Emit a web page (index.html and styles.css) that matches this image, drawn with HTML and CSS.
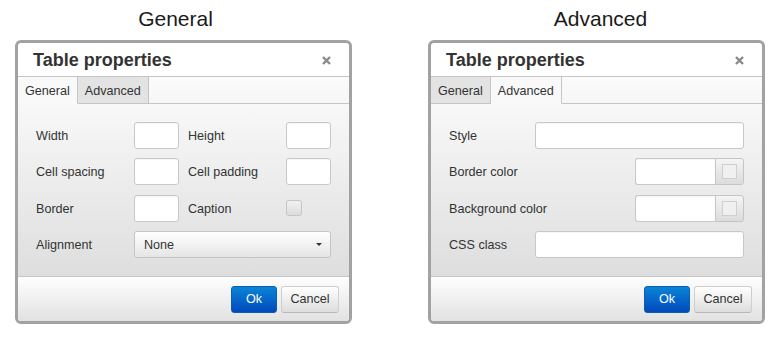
FILE: index.html
```html
<!doctype html>
<html lang=en>
<head>
<meta charset=utf-8>
<title>Table properties</title>
<link rel="stylesheet" href="styles.css">
</head>
<body>

<!-- general tab -->

<section class="column">
	<h2 class="caption caption-left">General</h2>
	<div class="dialog">
		<div class="head">
			<span class="title">Table properties</span>
			<svg class="close" width="9" height="9" viewBox="0 0 9 9"><path d="M1 1 L8 8 M8 1 L1 8" stroke="#8a8a8a" stroke-width="2.4"/></svg>
		</div>
		<div class="tabs">
			<span class="tab active">General</span>
			<span class="tab">Advanced</span>
		</div>
		<div class="body">
			<form class="grid-general">
				<label>Width</label>
				<span class="input"></span>
				<label>Height</label>
				<span class="input"></span>

				<label>Cell spacing</label>
				<span class="input"></span>
				<label>Cell padding</label>
				<span class="input"></span>

				<label>Border</label>
				<span class="input"></span>
				<label>Caption</label>
				<span class="check-cell"><span class="checkbox"></span></span>

				<label>Alignment</label>
				<span class="select">None<i class="caret"></i></span>
			</form>
		</div>
		<div class="foot">
			<button class="btn primary">Ok</button>
			<button class="btn">Cancel</button>
		</div>
	</div>
</section>

<!-- advanced tab -->

<section class="column">
	<h2 class="caption caption-right">Advanced</h2>
	<div class="dialog">
		<div class="head">
			<span class="title">Table properties</span>
			<svg class="close" width="9" height="9" viewBox="0 0 9 9"><path d="M1 1 L8 8 M8 1 L1 8" stroke="#8a8a8a" stroke-width="2.4"/></svg>
		</div>
		<div class="tabs">
			<span class="tab">General</span>
			<span class="tab active">Advanced</span>
		</div>
		<div class="body">
			<form class="grid-advanced">
				<label>Style</label>
				<span class="input"></span>

				<label>Border color</label>
				<span class="color"><span class="color-input"></span><span class="color-btn"><i></i></span></span>

				<label>Background color</label>
				<span class="color"><span class="color-input"></span><span class="color-btn"><i></i></span></span>

				<label>CSS class</label>
				<span class="input"></span>
			</form>
		</div>
		<div class="foot">
			<button class="btn primary">Ok</button>
			<button class="btn">Cancel</button>
		</div>
	</div>
</section>

</body>
</html>
```

FILE: styles.css
```css
/* ====  Page  ==== */

* {
	box-sizing: border-box;
}

html, body {
	margin:     0;
	background: white;
}

body {
	display:     flex;
	gap:         76px;
	padding:     0 0 0 15px;
	font-family: "Liberation Sans", Arial, sans-serif;
	color:       #333;
}

.column {
	display:        flex;
	flex-direction: column;
	width:          337px;
}

.caption {
	margin:      0 0 7px;
	padding-top: 7px;
	height:      33px;
	line-height: 24px;
	font-size:   21px;
	font-weight: normal;
	color:       #1a1a1a;
	text-align:  center;
}

.caption-left  { padding-right: 16px; }
.caption-right { padding-left:  8px; }


/* ====  Dialog  ==== */

.dialog {
	display:        flex;
	flex-direction: column;
	border:         3px solid #a2a2a2;
	border-radius:  6px;
	overflow:       hidden;
	background:     white;
}

.head {
	display:         flex;
	align-items:     center;
	justify-content: space-between;
	height:          34px;
	padding:         1px 18px 0 15px;
	border-bottom:   1px solid #c5c5c5;
}

.title {
	font-size:   18px;
	font-weight: bold;
	color:       #333;
}

.close {
	display: block;
}

.tabs {
	display:       flex;
	height:        27px;
	background:    linear-gradient(#fbfbfb, #f6f6f6);
	border-bottom: 1px solid #c5c5c5;
}

.tab {
	display:       flex;
	align-items:   center;
	padding:       1px 7px 0 7px;
	margin-bottom: -1px;
	font-size:     12.6px;
	white-space:   nowrap;
	background:    #e3e3e3;
	border-right:  1px solid #c5c5c5;
	border-bottom: 1px solid #c5c5c5;
	color:         #333;
}

.tab.active {
	background:          #f9f9f9;
	border-bottom-color: #f9f9f9;
}

.body {
	height:     172px;
	padding:    18px;
	background: linear-gradient(#f8f8f8, #dedede);
}

.foot {
	display:         flex;
	justify-content: flex-end;
	align-items:     center;
	gap:             4px;
	height:          45px;
	padding:         0 10px 0 0;
	border-top:      1px solid #c5c5c5;
	background:      linear-gradient(#fefefe, #e2e2e2);
}


/* ====  Form controls  ==== */

form {
	display:     grid;
	row-gap:     9.33px;
	column-gap:  9px;
	align-items: center;
	margin:      0;
}

.grid-general  { grid-template-columns: 89px 45px 89px 45px; }
.grid-advanced { grid-template-columns: 77px 1fr; }

label {
	font-size:   12.6px;
	white-space: nowrap;
	padding-top: 1px;
	color:       #333;
}

.input,
.color-input {
	display:       block;
	height:        27px;
	background:    white;
	border:        1px solid #c8c8c8;
	border-radius: 3px;
	box-shadow:    inset 0 1px 1px rgba(0, 0, 0, 0.04);
}

.check-cell {
	display:     flex;
	align-items: center;
	height:      27px;
}

.checkbox {
	width:         16px;
	height:        16px;
	border:        1px solid #c5c5c5;
	border-radius: 3px;
	background:    linear-gradient(#f2f2f2, #dcdcdc);
}

.select {
	grid-column:     span 3;
	display:         flex;
	align-items:     center;
	justify-content: space-between;
	height:          27px;
	padding:         1px 8px 0 9px;
	font-size:       12.6px;
	color:           #333;
	border:          1px solid #c5c5c5;
	border-radius:   3px;
	background:      linear-gradient(#ffffff, #e5e5e5);
}

.caret {
	width:        0;
	height:       0;
	border-left:  3px solid transparent;
	border-right: 3px solid transparent;
	border-top:   3px solid #333;
}

.color {
	display:      flex;
	justify-self: end;
	width:        109px;
	height:       27px;
}

.color-input {
	flex:                       1;
	border-top-right-radius:    0;
	border-bottom-right-radius: 0;
	border-right:               0;
}

.color-btn {
	display:         flex;
	align-items:     center;
	justify-content: center;
	width:           29px;
	border:          1px solid #c5c5c5;
	border-radius:   0 3px 3px 0;
	background:      linear-gradient(#f4f4f4, #dcdcdc);
}

.color-btn i {
	width:      15px;
	height:     15px;
	border:     1px solid #cfcfcf;
	background: #f0f0f0;
}

.btn {
	height:              27px;
	width:               58px;
	padding:             0;
	font-family:         inherit;
	font-size:           12.6px;
	color:               #333;
	border:              1px solid #cfcfcf;
	border-bottom-color: #b8b8b8;
	border-radius:       3px;
	background:          linear-gradient(#ffffff, #dddddd);
}

.btn.primary {
	width:        46px;
	color:        white;
	border-color: #0a5fb0;
	background:   linear-gradient(#0a84d6, #0049bd);
}
```
